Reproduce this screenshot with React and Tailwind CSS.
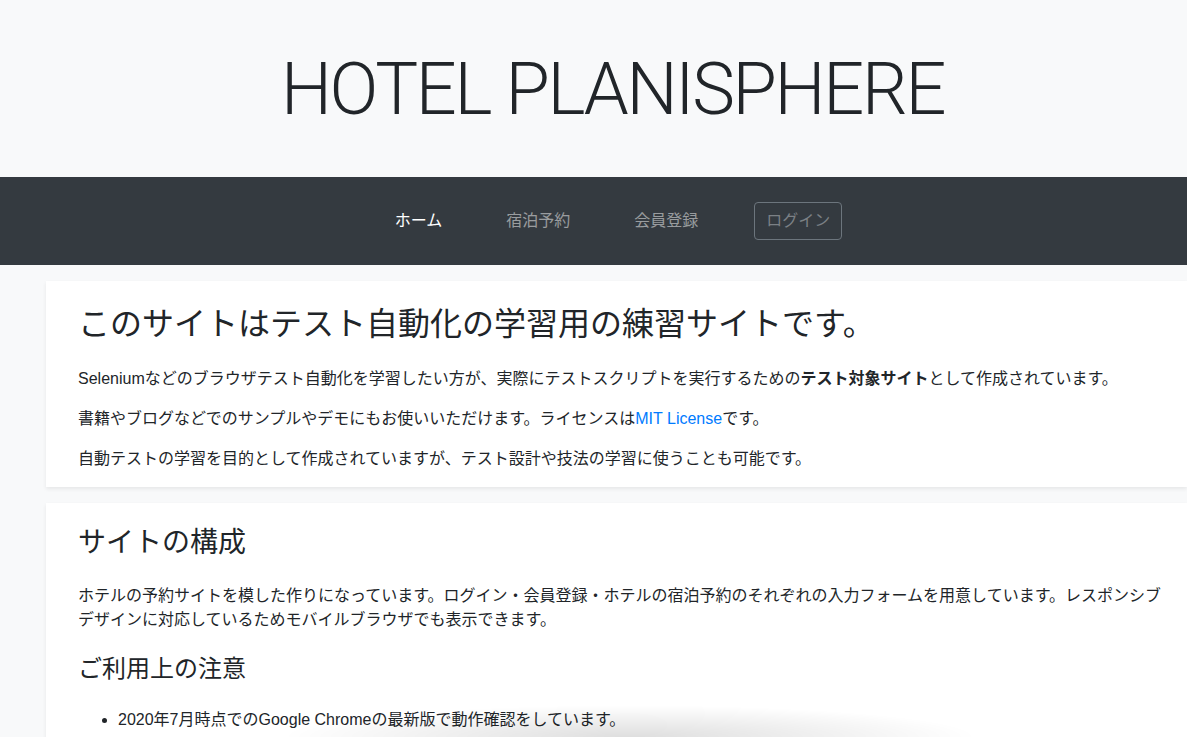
import React from "react";

const navLinks = [
  { label: "ホーム", active: true },
  { label: "宿泊予約" },
  { label: "会員登録" },
];

export default function App() {
  return (
    <div className="min-h-screen bg-[#f8f9fa] text-[#212529] font-['Liberation_Sans','Noto_Sans_CJK_JP',sans-serif]">
      <header className="h-[177px] flex items-center justify-center bg-[#f8f9fa] pl-[38px]">
        <h1 className="text-[72px] font-light leading-none tracking-[-2.3px] font-['Roboto','Noto_Sans_CJK_JP',sans-serif] pt-[2px]">
          HOTEL PLANISPHERE
        </h1>
      </header>

      <nav className="h-[88px] bg-[#343a40] flex items-center justify-center pl-[18px]">
        <ul className="flex items-center text-base">
          {navLinks.map((link) => (
            <li key={link.label}>
              <a href="#" className={`block px-8 py-2 ${link.active ? "text-white" : "text-white/50"}`}>
                {link.label}
              </a>
            </li>
          ))}
          <li className="ml-6">
            <button className="w-[88px] h-[38px] border border-[#6c757d] rounded text-[#7b8085]">ログイン</button>
          </li>
        </ul>
      </nav>

      <main className="pl-[46px] pt-4 space-y-4">
        <section className="bg-white shadow-[0_2px_4px_rgba(0,0,0,0.075)] pl-8 pr-6 pt-6">
          <h2 className="text-[32px] leading-[1.2] mb-6">このサイトはテスト自動化の学習用の練習サイトです。</h2>
          <p className="leading-6 mb-4">
            Seleniumなどのブラウザテスト自動化を学習したい方が、実際にテストスクリプトを実行するための<b>テスト対象サイト</b>として作成されています。
          </p>
          <p className="leading-6 mb-4">
            書籍やブログなどでのサンプルやデモにもお使いいただけます。ライセンスは<a href="#" className="text-[#007bff]">MIT License</a>です。
          </p>
          <p className="leading-6 pb-4">自動テストの学習を目的として作成されていますが、テスト設計や技法の学習に使うことも可能です。</p>
        </section>

        <section className="bg-white shadow-[0_2px_4px_rgba(0,0,0,0.075)] pl-8 pr-6 pt-[23px] pb-8">
          <h3 className="text-[28px] leading-[1.2] mb-6">サイトの構成</h3>
          <p className="leading-6 mb-4">
            ホテルの予約サイトを模した作りになっています。ログイン・会員登録・ホテルの宿泊予約のそれぞれの入力フォームを用意しています。レスポンシブデザインに対応しているためモバイルブラウザでも表示できます。
          </p>
          <h4 className="text-2xl leading-[1.2] mt-[23px] mb-6">ご利用上の注意</h4>
          <ul className="list-disc pl-10 leading-6">
            <li>2020年7月時点でのGoogle Chromeの最新版で動作確認をしています。</li>
          </ul>
        </section>
      </main>

      <div className="fixed bottom-0 left-[280px] w-[700px] h-[32px] pointer-events-none bg-[radial-gradient(ellipse_at_bottom,rgba(0,0,0,0.13),transparent_70%)]" />
    </div>
  );
}
